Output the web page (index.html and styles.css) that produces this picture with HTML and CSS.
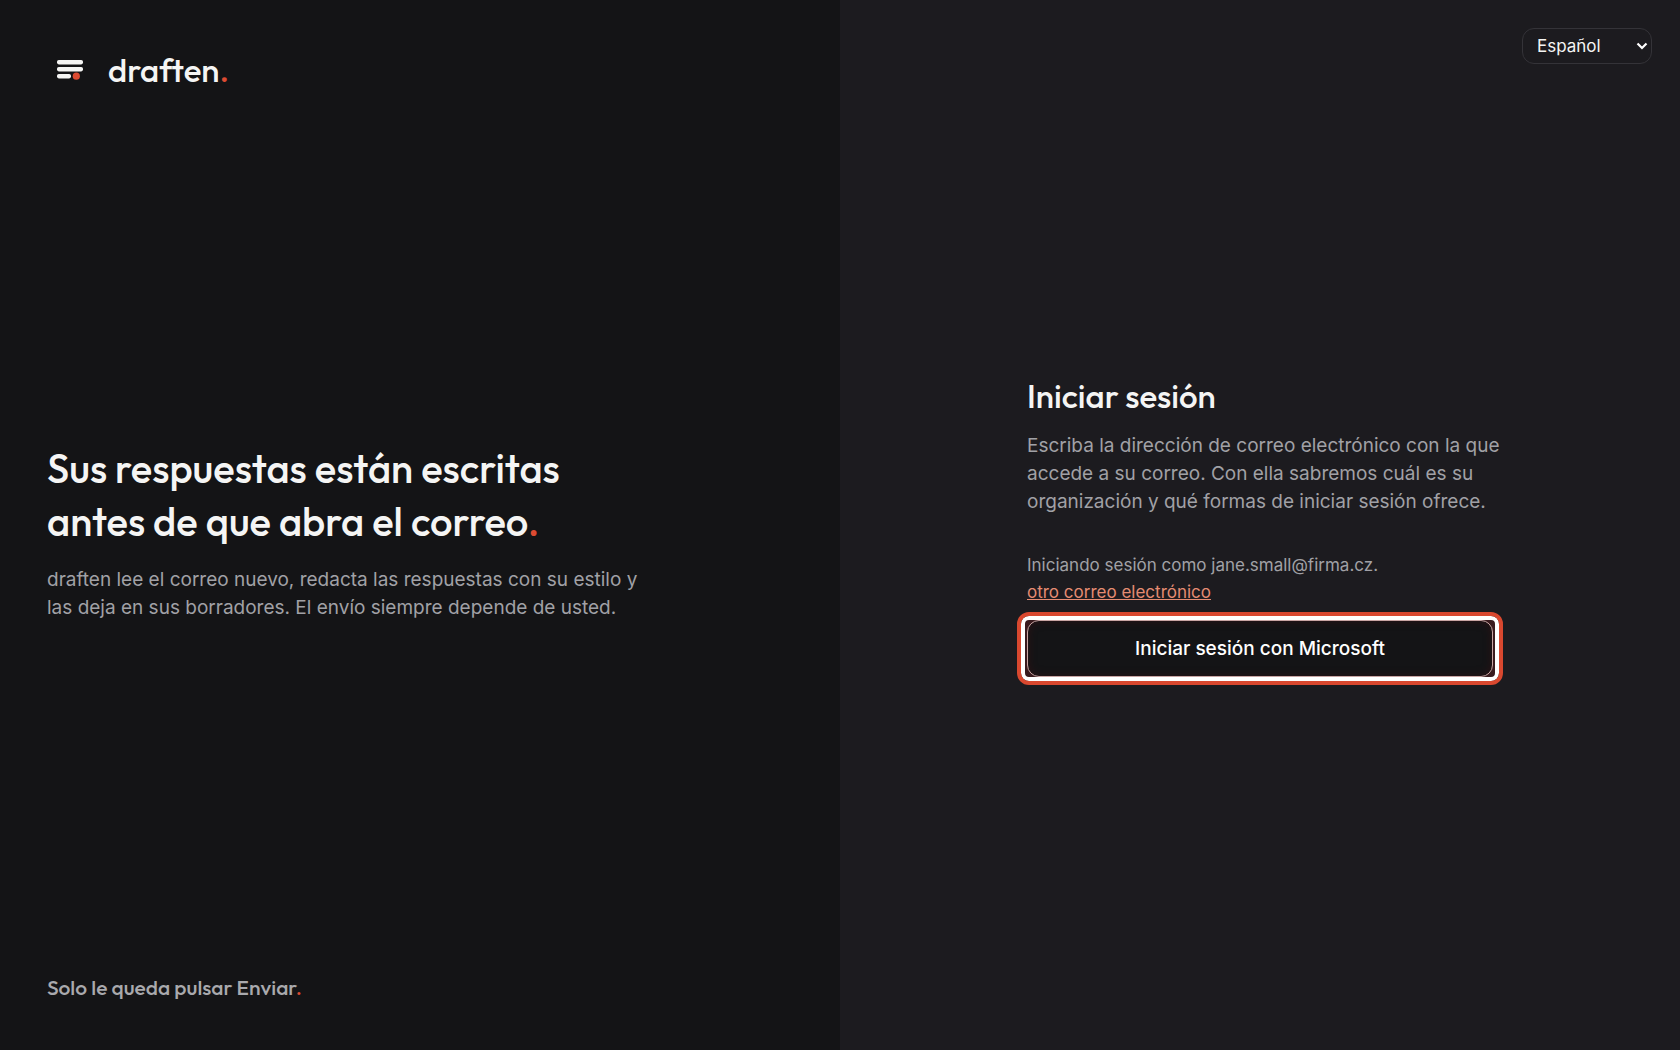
FILE: index.html
```html
<!DOCTYPE html>
<html lang="es">
<head>
<meta charset="utf-8">
<meta name="viewport" content="width=device-width, initial-scale=1">
<title>draften – Iniciar sesión</title>
<link rel="stylesheet" href="styles.css">
</head>
<body>
<div class="layout">
  <section class="intro">
    <header class="brand">
      <svg class="brand-icon" viewBox="0 0 26 20" aria-hidden="true">
        <rect x="0" y="0" width="26" height="4.400" rx="1.800" fill="#f5f5f4"/>
        <rect x="0" y="7" width="26" height="4.400" rx="1.800" fill="#f5f5f4"/>
        <rect x="0" y="14" width="14" height="4.400" rx="1.800" fill="#f5f5f4"/>
        <circle cx="19.300" cy="16.200" r="3.600" fill="#dd4b32"/>
      </svg>
      <span class="wordmark">draften<span class="dot">.</span></span>
    </header>
    <div class="pitch">
      <h1 class="headline">Sus respuestas están escritas<br>antes de que abra el correo<span class="dot">.</span></h1>
      <p class="lead">draften lee el correo nuevo, redacta las respuestas con su estilo y las deja en sus borradores. El envío siempre depende de usted.</p>
    </div>
    <p class="tagline">Solo le queda pulsar Enviar<span class="dot">.</span></p>
  </section>
  <main class="signin">
    <div class="language">
      <select class="language-select" aria-label="Idioma">
        <option>Español</option>
        <option>English</option>
      </select>
      <svg class="chevron" viewBox="0 0 12 8" aria-hidden="true"><path d="M1.500 1.500 6 6l4.500-4.500" fill="none" stroke="#fff" stroke-width="2.200"/></svg>
    </div>
    <div class="form">
      <h2 class="title">Iniciar sesión</h2>
      <p class="lead instructions">Escriba la dirección de correo electrónico con la que<br>accede a su correo. Con ella sabremos cuál es su<br>organización y qué formas de iniciar sesión ofrece.</p>
      <p class="account">Iniciando sesión como jane.small@firma.cz.<br><a class="other" href="#">otro correo electrónico</a></p>
      <div class="ring"><button class="submit" type="button">Iniciar sesión con Microsoft</button></div>
    </div>
  </main>
</div>
</body>
</html>
```
FILE: styles.css
```css
* {
  box-sizing: border-box;
}

body {
  margin: 0;
  background: #1c1b1f;
  color: #f5f5f4;
  font-family: Inter, sans-serif;
}

h1,
h2,
p {
  margin: 0;
}

.layout {
  display: grid;
  grid-template-columns: 1fr 1fr;
  min-height: 100vh;
}

.intro {
  display: flex;
  flex-direction: column;
  justify-content: space-between;
  padding: 48px 47px;
  background: #141416;
}

.brand {
  display: flex;
  align-items: center;
  gap: 25px;
  padding-left: 10px;
}

.brand-icon {
  width: 26px;
  height: 20px;
}

.wordmark {
  font-family: Outfit, Lato, sans-serif;
  font-size: 33px;
  font-weight: 500;
  line-height: 44px;
}

.dot {
  color: #dd4b32;
}

.pitch {
  display: flex;
  flex-direction: column;
  gap: 18px;
  max-width: 600px;
}

.headline {
  font-family: Outfit, Lato, sans-serif;
  font-size: 40px;
  font-weight: 500;
  line-height: 53px;
  white-space: nowrap;
}

.lead {
  color: #a1a1a6;
  font-size: 19px;
  line-height: 28px;
}

.instructions {
  white-space: nowrap;
}

.tagline {
  color: #a9a9ad;
  font-family: Outfit, Lato, sans-serif;
  font-size: 21px;
  font-weight: 500;
  line-height: 30px;
}

.signin {
  position: relative;
  display: flex;
  align-items: center;
  justify-content: center;
  padding: 28px;
}

.language {
  position: absolute;
  top: 28px;
  right: 28px;
  display: flex;
  align-items: center;
}

.language-select {
  width: 130px;
  height: 36px;
  padding: 0 14px;
  border: 1px solid #343338;
  border-radius: 12px;
  appearance: none;
  background: #1c1b1f;
  color: #f5f5f4;
  font: 17px Inter, sans-serif;
}

.chevron {
  position: absolute;
  right: 4px;
  width: 12px;
  height: 8px;
  pointer-events: none;
}

.form {
  width: 100%;
  max-width: 466px;
  padding-top: 8px;
}

.title {
  margin-bottom: 14px;
  font-family: Outfit, Lato, sans-serif;
  font-size: 33px;
  font-weight: 500;
  line-height: 44px;
}

.account {
  margin: 36px 0 6px;
  color: #a1a1a6;
  font-size: 17px;
  line-height: 27px;
}

.other {
  color: #e58b72;
  text-decoration: underline;
}

.ring {
  margin: 0 -10px;
  padding: 4px 6px;
  border: 4px solid #d9482f;
  border-radius: 12px;
  background: #3a1b1e;
  box-shadow: inset 0 0 0 4px #fff;
}

.submit {
  display: block;
  width: 100%;
  height: 57px;
  border: 1px solid #c9a5a3;
  border-radius: 12px;
  background: #141416;
  box-shadow: inset 0 0 8px #2c1214;
  color: #fff;
  font: 500 19px Inter, sans-serif;
}
```
